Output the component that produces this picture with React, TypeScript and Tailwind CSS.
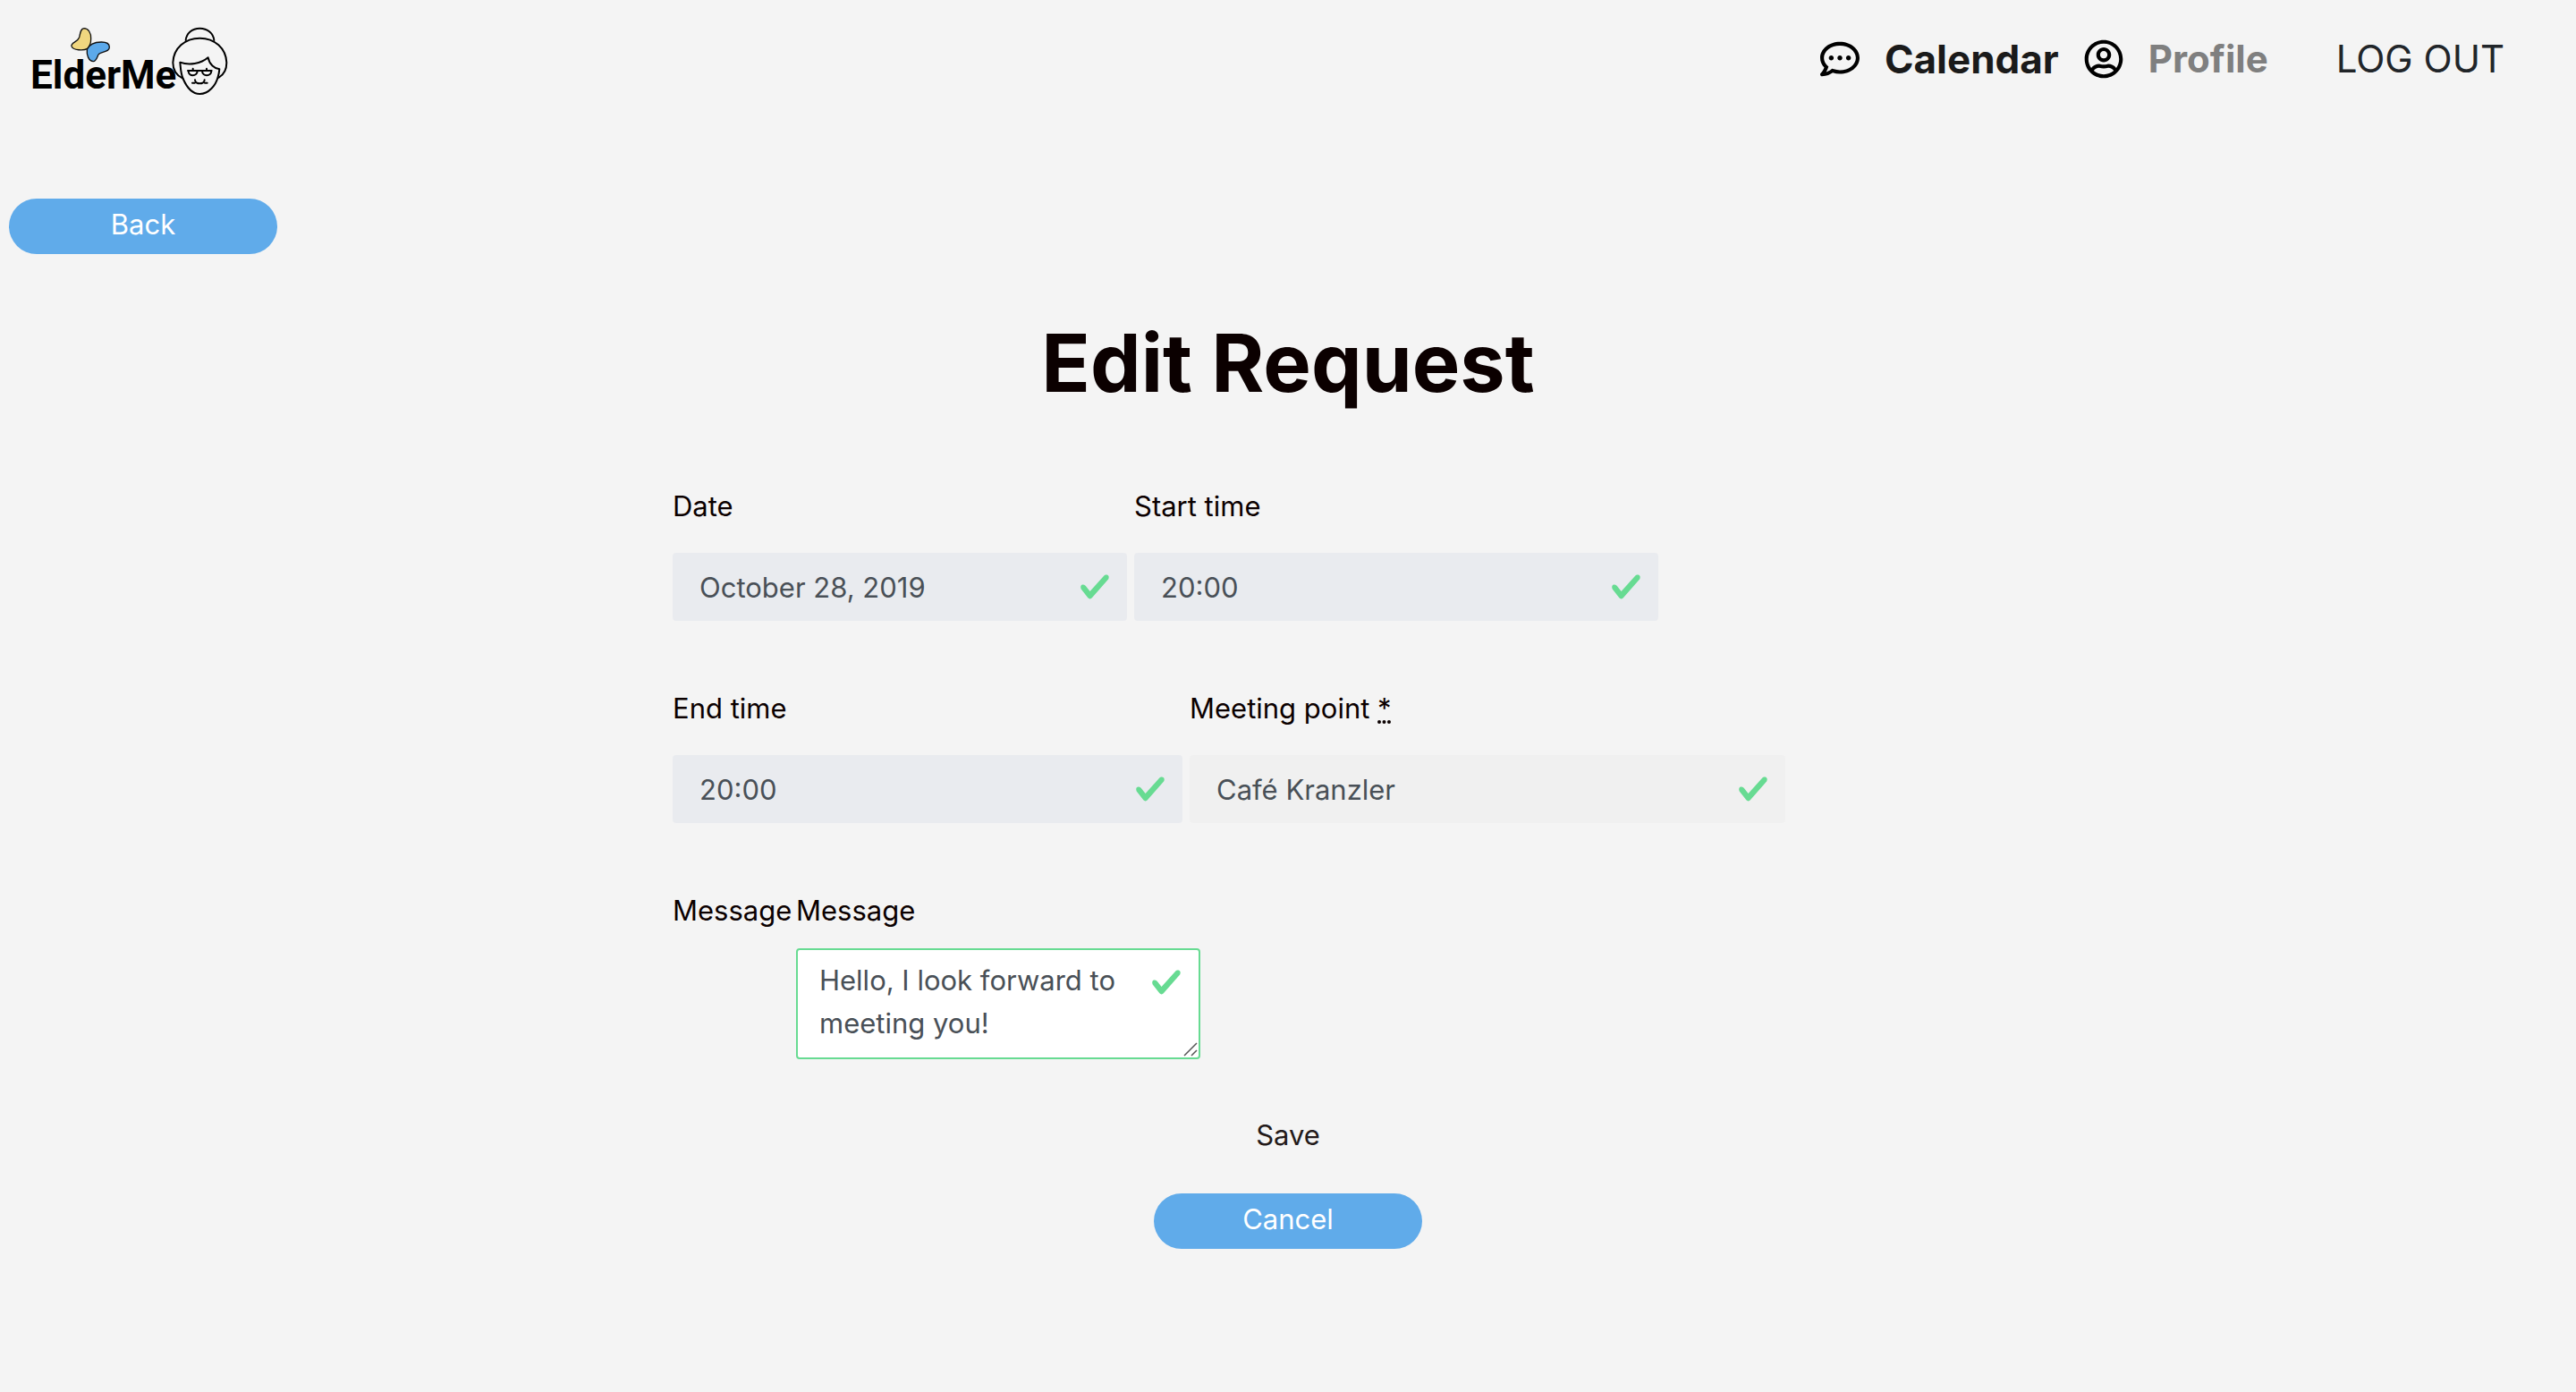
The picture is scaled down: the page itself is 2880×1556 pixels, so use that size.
import React from 'react';
import { FaRegCommentDots, FaRegUserCircle } from 'react-icons/fa';

function Logo() {
  return (
    <svg viewBox="0 0 750 330" className="h-[110px] w-[250px]" role="img" aria-label="ElderMe">
      <text x="42" y="268" fontFamily="Roboto, sans-serif" fontWeight="700" fontSize="132" fill="#000">
        ElderMe
      </text>
      <g stroke="#111" strokeWidth="4" strokeLinejoin="round">
        <path
          d="M222 65C236 65 246 80 245 100C245 114 241 126 233 133C222 140 184 140 180 125C177 112 200 112 206 95C209 82 210 66 222 65Z"
          fill="#f0d67f"
        />
        <path
          d="M232 136C240 117 258 111 280 111C296 111 307 117 307 128C307 147 278 141 270 153C265 163 263 175 253 176C237 175 230 154 232 136Z"
          fill="#5ca9ea"
        />
      </g>
      <g fill="none" stroke="#000" strokeWidth="6" strokeLinecap="round" strokeLinejoin="round">
        <path d="M563 105C565 82 584 65 610 65C636 65 656 82 658 105" />
        <path d="M553 233C532 223 520 203 520 180C522 132 560 98 610 98C660 98 698 132 700 180C700 203 691 220 674 230" />
        <path d="M544 179C546 200 546 216 554 234C566 262 586 285 610 285C640 285 664 256 671 228C674 218 675 212 676 202C660 200 642 186 638 163C614 184 574 190 544 179Z" />
        <path d="M570 207H650M572 208C572 228 601 228 602 208M618 208C619 228 648 228 649 208M587 207V200M633 207V200" />
        <path d="M585 248H593M627 248H635M594 238C594 254 626 254 626 238" />
      </g>
    </svg>
  );
}

function Check({ className }: { className: string }) {
  return (
    <svg viewBox="0 0 8 8" aria-hidden="true" className={`pointer-events-none absolute size-9 ${className}`}>
      <path
        fill="#67db92"
        d="M2.3 6.73L.6 4.53c-.4-1.04.46-1.4 1.1-.8l1.1 1.4 3.4-3.8c.6-.63 1.6-.27 1.2.7l-4 4.6c-.43.5-.8.4-1.1.1z"
      />
    </svg>
  );
}

type FieldProps = {
  id: string;
  label: React.ReactNode;
  value: string;
  width: string;
  tone?: string;
};

function Field({ id, label, value, width, tone = 'bg-[#e9ebef]' }: FieldProps) {
  return (
    <div className={`flex flex-col gap-7 ${width}`}>
      <label htmlFor={id}>{label}</label>
      <div className="relative">
        <input
          id={id}
          type="text"
          defaultValue={value}
          className={`block h-[76px] w-full rounded-sm pr-16 pl-[30px] text-[#495057] outline-none ${tone}`}
        />
        <Check className="top-5 right-[18px]" />
      </div>
    </div>
  );
}

const pill = 'flex h-[62px] w-[300px] items-center justify-center rounded-full bg-[#60abea] pb-1 text-white';

export default function App() {
  return (
    <div className="min-h-screen bg-[#f4f4f4] font-['Inter',sans-serif] text-[31px] leading-[48px] text-[#0b0000]">
      <header className="flex items-start justify-between pt-2.5 pr-20 pl-5">
        <a href="#home">
          <Logo />
        </a>
        <nav className="flex items-center gap-7 pt-8 text-[42px]">
          <a href="#messages" aria-label="Messages">
            <FaRegCommentDots className="size-11 text-black" />
          </a>
          <a href="#calendar" className="text-[44px] font-bold text-[#1a1a1a]">
            Calendar
          </a>
          <FaRegUserCircle className="size-11 text-black" />
          <a href="#profile" className="font-bold text-[#7f7f7f]">
            Profile
          </a>
          <a href="#logout" className="ml-12 text-[#212529]">
            LOG OUT
          </a>
        </nav>
      </header>

      <main className="pt-[102px] pb-16">
        <button type="button" className={`ml-2.5 ${pill}`}>
          Back
        </button>

        <h1 className="mt-[69px] text-center text-[90px] leading-[106px] font-bold">Edit Request</h1>

        <form className="mx-auto mt-[83px] flex max-w-[1376px] flex-col">
          <div className="flex gap-2">
            <Field id="date" label="Date" value="October 28, 2019" width="w-[508px]" />
            <Field id="start" label="Start time" value="20:00" width="w-[586px]" />
          </div>

          <div className="mt-[74px] flex gap-2">
            <Field id="end" label="End time" value="20:00" width="w-[570px]" />
            <Field
              id="place"
              label={
                <>
                  Meeting point{' '}
                  <abbr
                    title="required"
                    className="underline decoration-dotted decoration-4 underline-offset-2 [text-decoration-skip-ink:none]"
                  >
                    *
                  </abbr>
                </>
              }
              value="Café Kranzler"
              width="w-[666px]"
              tone="bg-[#f0f0f0]"
            />
          </div>

          <div className="mt-[74px] flex">
            <label htmlFor="message" className="w-[138px]">
              Message
            </label>
            <div className="flex w-[452px] flex-col gap-[18px]">
              <label htmlFor="message">Message</label>
              <div className="relative">
                <textarea
                  id="message"
                  defaultValue="Hello, I look forward to meeting you!"
                  className="block h-[124px] w-full resize-none overflow-hidden rounded-sm border-2 border-[#67db92] bg-white py-2.5 pr-12 pl-6 text-[#495057] outline-none"
                />
                <Check className="top-5 right-5" />
                <svg
                  viewBox="0 0 16 16"
                  aria-hidden="true"
                  className="pointer-events-none absolute right-[3px] bottom-[3px] size-4"
                >
                  <path d="M1 15L15 1M9 15L15 9" stroke="#555" strokeWidth="1.5" />
                </svg>
              </div>
            </div>
          </div>

          <button type="submit" className="mt-[61px] self-center text-[#231a1a]">
            Save
          </button>
          <button type="button" className={`mt-[41px] self-center ${pill}`}>
            Cancel
          </button>
        </form>
      </main>
    </div>
  );
}
